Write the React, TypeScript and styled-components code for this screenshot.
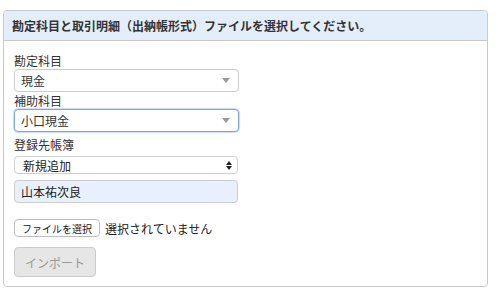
import React from 'react';
import styled, { createGlobalStyle } from 'styled-components';

const GlobalStyle = createGlobalStyle`
  body {
    margin: 0;
    background: #ffffff;
    font-family: "Noto Sans CJK JP", "Noto Sans", sans-serif;
    color: #333333;
  }
`;

const App = () => {
  return (
    <>
      <GlobalStyle />
      <Panel>
        <Header>勘定科目と取引明細（出納帳形式）ファイルを選択してください。</Header>
        <Body>
          <Label>勘定科目</Label>
          <Select>
            <span>現金</span>
            <Caret />
          </Select>

          <Label $top={0}>補助科目</Label>
          <Select $focused>
            <span>小口現金</span>
            <Caret />
          </Select>

          <Label $top={4}>登録先帳簿</Label>
          <NativeSelect>
            <span>新規追加</span>
            <Spinner>
              <Up />
              <Down />
            </Spinner>
          </NativeSelect>

          <NameInput>山本祐次良</NameInput>

          <FileRow>
            <FileButton>ファイルを選択</FileButton>
            <FileText>選択されていません</FileText>
          </FileRow>

          <ImportButton disabled>インポート</ImportButton>
        </Body>
      </Panel>
    </>
  );
};

export default App;

const Panel = styled.div`
  margin: 10px 0 0 3px;
  width: 485px;
  height: 277px;
  box-sizing: border-box;
  border: 1px solid #c9c9c9;
  border-radius: 4px;
  overflow: hidden;
`;

const Header = styled.div`
  height: 30px;
  box-sizing: border-box;
  padding: 0 8px;
  display: flex;
  align-items: center;
  background: #e4eefa;
  border-bottom: 1px solid #c9c9c9;
  font-size: 12px;
  font-weight: 700;
  color: #333333;
`;

const Body = styled.div`
  padding: 11px 10px 10px 10px;
  display: flex;
  flex-direction: column;
  align-items: flex-start;
`;

const Label = styled.div<{ $top?: number }>`
  margin-top: ${(p) => p.$top ?? 0}px;
  font-size: 12px;
  line-height: 17px;
  color: #333333;
`;

const Select = styled.div<{ $focused?: boolean }>`
  width: 225px;
  height: 23px;
  box-sizing: border-box;
  padding: 0 8px 0 6px;
  display: flex;
  align-items: center;
  justify-content: space-between;
  border: 1px solid ${(p) => (p.$focused ? '#7aa7e0' : '#cccccc')};
  box-shadow: ${(p) => (p.$focused ? '0 0 1px 1px rgba(102,153,224,0.35)' : 'none')};
  border-radius: 4px;
  background: #ffffff;
  font-size: 12px;
  color: #333333;
`;

const Caret = styled.span`
  width: 0;
  height: 0;
  border-left: 4px solid transparent;
  border-right: 4px solid transparent;
  border-top: 5px solid #999999;
`;

const NativeSelect = styled.div`
  margin-top: 3px;
  width: 224px;
  height: 18px;
  box-sizing: border-box;
  padding: 0 5px 0 8px;
  display: flex;
  align-items: center;
  justify-content: space-between;
  border: 1px solid #cfcfcf;
  border-radius: 4px;
  background: #ffffff;
  font-size: 12px;
  color: #222222;
`;

const Spinner = styled.span`
  display: flex;
  flex-direction: column;
  gap: 1px;
`;

const Up = styled.span`
  width: 0;
  height: 0;
  border-left: 3px solid transparent;
  border-right: 3px solid transparent;
  border-bottom: 4px solid #222222;
`;

const Down = styled.span`
  width: 0;
  height: 0;
  border-left: 3px solid transparent;
  border-right: 3px solid transparent;
  border-top: 4px solid #222222;
`;

const NameInput = styled.div`
  margin-top: 6px;
  width: 224px;
  height: 23px;
  box-sizing: border-box;
  padding: 0 6px;
  display: flex;
  align-items: center;
  border: 1px solid #cccccc;
  border-radius: 4px;
  background: #e8f0fe;
  font-size: 12px;
  color: #222222;
`;

const FileRow = styled.div`
  margin-top: 16px;
  display: flex;
  align-items: center;
  gap: 5px;
`;

const FileButton = styled.button`
  height: 18px;
  box-sizing: border-box;
  padding: 0 7px;
  border: 1px solid #bdbdbd;
  border-radius: 4px;
  background: #ffffff;
  font-family: "Noto Sans CJK JP", "Noto Sans", sans-serif;
  font-size: 10px;
  color: #222222;
  display: flex;
  align-items: center;
`;

const FileText = styled.span`
  font-size: 12px;
  color: #222222;
`;

const ImportButton = styled.button`
  margin-top: 10px;
  width: 82px;
  height: 30px;
  box-sizing: border-box;
  border: 1px solid #cccccc;
  border-radius: 4px;
  background: #e6e6e6;
  font-family: "Noto Sans CJK JP", "Noto Sans", sans-serif;
  font-size: 12px;
  color: #9a9a9a;
`;
